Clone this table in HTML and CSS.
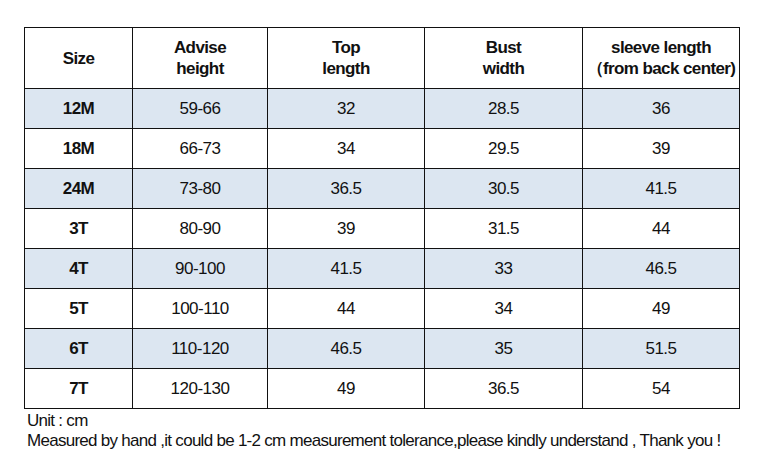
FILE: index.html
```html
<!DOCTYPE html>
<html>
<head>
<meta charset="utf-8">
<link rel="stylesheet" href="styles.css">
</head>
<body>
<div class="page">
  <table class="size-table">
    <colgroup>
      <col class="c1"><col class="c2"><col class="c3"><col class="c4"><col class="c5">
    </colgroup>
    <thead>
      <tr class="head">
        <th>Size</th>
        <th>Advise<br>height</th>
        <th>Top<br>length</th>
        <th>Bust<br>width</th>
        <th>sleeve length<br>（from back center)</th>
      </tr>
    </thead>
    <tbody>
      <tr class="blue"><th>12M</th><td>59-66</td><td>32</td><td>28.5</td><td>36</td></tr>
      <tr><th>18M</th><td>66-73</td><td>34</td><td>29.5</td><td>39</td></tr>
      <tr class="blue"><th>24M</th><td>73-80</td><td>36.5</td><td>30.5</td><td>41.5</td></tr>
      <tr><th>3T</th><td>80-90</td><td>39</td><td>31.5</td><td>44</td></tr>
      <tr class="blue"><th>4T</th><td>90-100</td><td>41.5</td><td>33</td><td>46.5</td></tr>
      <tr><th>5T</th><td>100-110</td><td>44</td><td>34</td><td>49</td></tr>
      <tr class="blue"><th>6T</th><td>110-120</td><td>46.5</td><td>35</td><td>51.5</td></tr>
      <tr><th>7T</th><td>120-130</td><td>49</td><td>36.5</td><td>54</td></tr>
    </tbody>
  </table>
  <p class="note first">Unit : cm</p>
  <p class="note">Measured by hand ,it could be 1-2 cm measurement tolerance,please kindly understand , Thank you !</p>
</div>
</body>
</html>
```

FILE: styles.css
```css
html, body {
  margin: 0;
  padding: 0;
  background: #ffffff;
}
.page {
  padding: 27px 0 0 24px;
  font-family: "Liberation Sans", Arial, sans-serif;
  color: #111111;
}
.size-table {
  border-collapse: collapse;
  table-layout: fixed;
  width: 715px;
}
.c1 { width: 108px; }
.c2 { width: 135px; }
.c3 { width: 157px; }
.c4 { width: 158px; }
.c5 { width: 157px; }
.size-table th,
.size-table td {
  border: 1.5px solid #111111;
  text-align: center;
  vertical-align: middle;
  padding: 0;
  font-size: 17px;
  line-height: 21px;
  letter-spacing: -0.6px;
}
.size-table th {
  font-weight: bold;
}
.size-table td {
  font-weight: normal;
  letter-spacing: -0.5px;
}
.head th {
  height: 60px;
}
.size-table tbody tr {
  height: 40px;
}
.blue th, .blue td {
  background: #dce6f1;
}
.note {
  margin: 0;
  font-size: 17px;
  line-height: 20px;
  padding-left: 3px;
  letter-spacing: -0.72px;
}
.note.first {
  margin-top: 2px;
}
```
